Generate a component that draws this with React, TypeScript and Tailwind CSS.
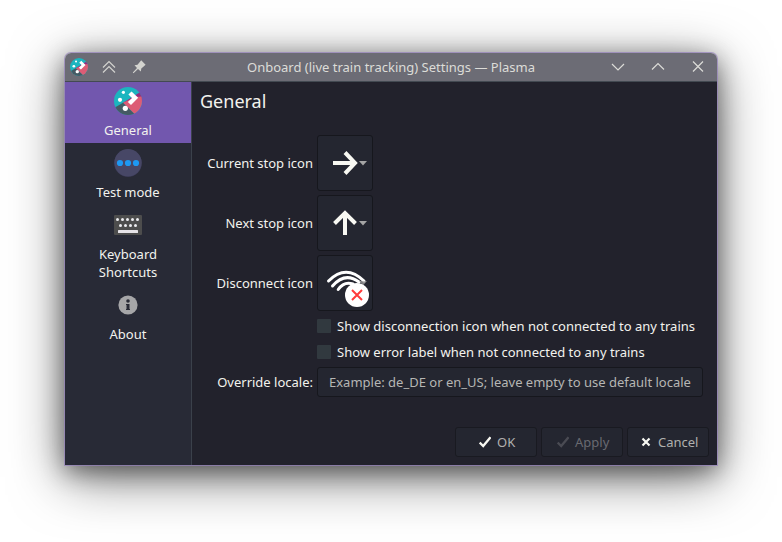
import type { ReactNode } from "react";

function OnboardIcon({ size }: { size: number }) {
  return (
    <svg width={size} height={size} viewBox="0 0 28 28">
      <defs>
        <clipPath id={`disc${size}`}>
          <circle cx="14" cy="14" r="14" />
        </clipPath>
      </defs>
      <g clipPath={`url(#disc${size})`}>
        <rect width="28" height="28" fill="#1cb5bf" />
        <path d="M28 4 L9 15.8 L12 18 L28 14Z" fill="#952e7f" />
        <path d="M28 9.5 L22 10 L9 15.8 L21.5 28 H28Z" fill="#dd5c75" />
        <path d="M0 21 L9 15.8 L21.5 28 H0Z" fill="#455a64" />
      </g>
      <path d="M17.5 4.4 L24.2 10.8 L17 18 L13.9 15 L18 10.9 L14.4 7.5Z" fill="#fff" />
      <circle cx="9.4" cy="5.3" r="1.6" fill="#fff" />
      <circle cx="6" cy="12.8" r="2.1" fill="#fff" />
      <circle cx="11.3" cy="21.3" r="2.6" fill="#fff" />
    </svg>
  );
}

function TestIcon() {
  return (
    <svg width="28" height="28" viewBox="0 0 28 28">
      <circle cx="14" cy="14.2" r="13.8" fill="#35354c" />
      <circle cx="14" cy="13.8" r="13.7" fill="#474766" />
      <circle cx="6" cy="14" r="3.1" fill="#1d99f3" />
      <circle cx="14" cy="14" r="3.1" fill="#1d99f3" />
      <circle cx="22" cy="14" r="3.1" fill="#1d99f3" />
    </svg>
  );
}

function KeyboardIcon() {
  return (
    <svg width="28" height="28" viewBox="0 0 28 28">
      <rect y="4" width="28" height="20" rx="1" fill="#4d4d4d" />
      {[3.5, 8.5, 13.5, 18.5, 23.5].map((x) => (
        <circle key={x} cx={x} cy="8.5" r="1.5" fill="#ececf0" />
      ))}
      {[6.5, 11.5, 16.5, 21.5].map((x) => (
        <circle key={x} cx={x} cy="14.5" r="1.5" fill="#ececf0" />
      ))}
      <rect x="4" y="19" width="20" height="3" rx="0.5" fill="#e6e3e8" />
    </svg>
  );
}

function InfoIcon() {
  return (
    <svg width="28" height="28" viewBox="0 0 28 28">
      <circle cx="14" cy="14" r="9.6" fill="#a6a6a8" />
      <circle cx="14" cy="10" r="1.8" fill="#282a36" />
      <path d="M12 13 H15.5 V18 H16 V19 H12 V18 H12.5 V14 H12Z" fill="#282a36" />
    </svg>
  );
}

function SideItem({ icon, label, active }: { icon: ReactNode; label: string; active?: boolean }) {
  return (
    <div
      className={
        active
          ? "flex flex-col items-center bg-[#7257ae] pt-[5px] pb-1"
          : "flex flex-col items-center pt-1.5 pb-1"
      }
    >
      {icon}
      <div className="mt-1.5 w-20 text-center">{label}</div>
    </div>
  );
}

function IconButton({ children }: { children: ReactNode }) {
  return (
    <div className="h-14 w-14 rounded-[3px] border border-[#16171d] bg-[#242630]">
      <svg width="54" height="54" viewBox="1 1 54 54">
        {children}
      </svg>
    </div>
  );
}

function Row({ label, children }: { label: string; children: ReactNode }) {
  return (
    <div className="flex items-center">
      <div className="w-[121px] pr-1 text-right whitespace-nowrap">{label}</div>
      {children}
    </div>
  );
}

function Check({ label }: { label: string }) {
  return (
    <div className="ml-[121px] flex h-[26px] items-center gap-1.5">
      <div className="h-3.5 w-3.5 rounded-[1px] bg-[#31393f]" />
      <span className="whitespace-nowrap">{label}</span>
    </div>
  );
}

function Tick({ color }: { color: string }) {
  return (
    <svg width="12" height="12" viewBox="0 0 12 12">
      <path d="M0.7 6.6 L4.2 10 L11.5 1.2" fill="none" stroke={color} strokeWidth="2.3" />
    </svg>
  );
}

function DialogButton({ children, className }: { children: ReactNode; className: string }) {
  return (
    <div
      className={`flex h-[30px] w-[82px] items-center rounded-[3px] border border-[#191a21] bg-[#242630] ${className}`}
    >
      {children}
    </div>
  );
}

export default function App() {
  return (
    <div className="h-[542px] w-[782px] overflow-hidden bg-white pt-[53px] pl-[65px] font-['Noto_Sans',sans-serif] text-[13px] leading-[18px] text-[#f2f2ee]">
      <div className="flex h-[412px] w-[652px] flex-col rounded-t-[6px] shadow-[0_0_0_1px_rgba(150,130,190,0.7),0_12px_54px_0_rgba(0,0,0,0.55),0_6px_24px_0_rgba(0,0,0,0.45)]">
        <div className="flex h-[29px] items-center rounded-t-[6px] border-b border-[#434a52] bg-[#6c6c75] pl-[5px] text-[#dcdcd8]">
          <OnboardIcon size={18} />
          <svg className="ml-[14px]" width="14" height="14" viewBox="0 0 14 14">
            <path d="M1 7.5 L7 1.5 L13 7.5 M1 12.5 L7 6.5 L13 12.5" fill="none" stroke="#d3d3cf" strokeWidth="1.2" />
          </svg>
          <svg className="ml-4" width="14" height="14" viewBox="0 0 14 14">
            <path d="M9.2 0.3 L13.6 4.7 L12.2 6 L9.3 8.6 L8.8 11.4 L6 9 L1.5 13.2 L0.8 12.5 L5 8 L2.5 5.2 L5.5 4.7 L8 1.8Z" fill="#d3d3cf" />
          </svg>
          <div className="ml-[100px] w-[290px] text-center whitespace-nowrap">
            Onboard (live train tracking) Settings — Plasma
          </div>
          <svg className="ml-[75px]" width="14" height="14" viewBox="0 0 14 14">
            <path d="M1 4 L7 10 L13 4" fill="none" stroke="#dcdcd8" strokeWidth="1.2" />
          </svg>
          <svg className="ml-[26px]" width="14" height="14" viewBox="0 0 14 14">
            <path d="M1 9.5 L7 3.5 L13 9.5" fill="none" stroke="#dcdcd8" strokeWidth="1.2" />
          </svg>
          <svg className="ml-[26px]" width="14" height="14" viewBox="0 0 14 14">
            <path d="M2 1.5 L12 11.5 M12 1.5 L2 11.5" fill="none" stroke="#dcdcd8" strokeWidth="1.2" />
          </svg>
        </div>
        <div className="flex flex-1 bg-[#22222c]">
          <div className="w-[127px] border-r border-[#3b414b] bg-[#282a36]">
            <SideItem icon={<OnboardIcon size={28} />} label="General" active />
            <SideItem icon={<TestIcon />} label="Test mode" />
            <SideItem icon={<KeyboardIcon />} label="Keyboard Shortcuts" />
            <SideItem icon={<InfoIcon />} label="About" />
          </div>
          <div className="flex flex-1 flex-col pr-2 pb-2 pl-1">
            <div className="h-[53px] pt-[7px] pl-1 text-[18px] leading-[25px]">General</div>
            <div className="flex flex-col gap-1">
              <Row label="Current stop icon">
                <IconButton>
                  <path d="M16 28 H37 M28 17.5 L38 28 L28 38.5" fill="none" stroke="#f8f8f2" strokeWidth="4" />
                  <path d="M42 26 H50 L46 30.5Z" fill="#a5a5a5" />
                </IconButton>
              </Row>
              <Row label="Next stop icon">
                <IconButton>
                  <path d="M28 40 V19 M17.5 28.5 L28 18 L38.5 28.5" fill="none" stroke="#f8f8f2" strokeWidth="4" />
                  <path d="M42 26 H50 L46 30.5Z" fill="#a5a5a5" />
                </IconButton>
              </Row>
              <Row label="Disconnect icon">
                <IconButton>
                  <path
                    d="M11.5 26 Q29 8.5 47 26 M15.5 31 Q28 16.5 42 27 M21.2 34.5 Q27 26 36 29"
                    fill="none"
                    stroke="#fff"
                    strokeWidth="3"
                    strokeLinecap="round"
                  />
                  <path d="M42 26 H50 L46 30.5Z" fill="#a5a5a5" fillOpacity="0.7" />
                  <circle cx="40" cy="40" r="12" fill="#fff" />
                  <path d="M35 35 L45 45 M45 35 L35 45" fill="none" stroke="#ff3a3a" strokeWidth="2" />
                </IconButton>
              </Row>
            </div>
            <div className="pt-0.5">
              <Check label="Show disconnection icon when not connected to any trains" />
              <Check label="Show error label when not connected to any trains" />
            </div>
            <div className="pt-0.5">
              <Row label="Override locale:">
                <div className="flex h-[30px] w-[386px] items-center rounded-[3px] border border-[#16171d] bg-[#242630] pl-[11px] whitespace-nowrap text-[#b6b6b4]">
                  Example: de_DE or en_US; leave empty to use default locale
                </div>
              </Row>
            </div>
            <div className="mt-auto flex justify-end gap-1">
              <DialogButton className="gap-1.5 pl-[23px] text-[#b0b0ae]">
                <Tick color="#f8f8f2" />
                OK
              </DialogButton>
              <DialogButton className="gap-1.5 pl-[15px] text-[#696a70]">
                <Tick color="#4a4b53" />
                Apply
              </DialogButton>
              <DialogButton className="gap-1.5 pl-3 text-[#b0b0ae]">
                <svg width="12" height="12" viewBox="0 0 12 12">
                  <path d="M2.5 2.5 L9.5 9.5 M9.5 2.5 L2.5 9.5" fill="none" stroke="#f8f8f2" strokeWidth="2.2" />
                </svg>
                Cancel
              </DialogButton>
            </div>
          </div>
        </div>
      </div>
    </div>
  );
}
